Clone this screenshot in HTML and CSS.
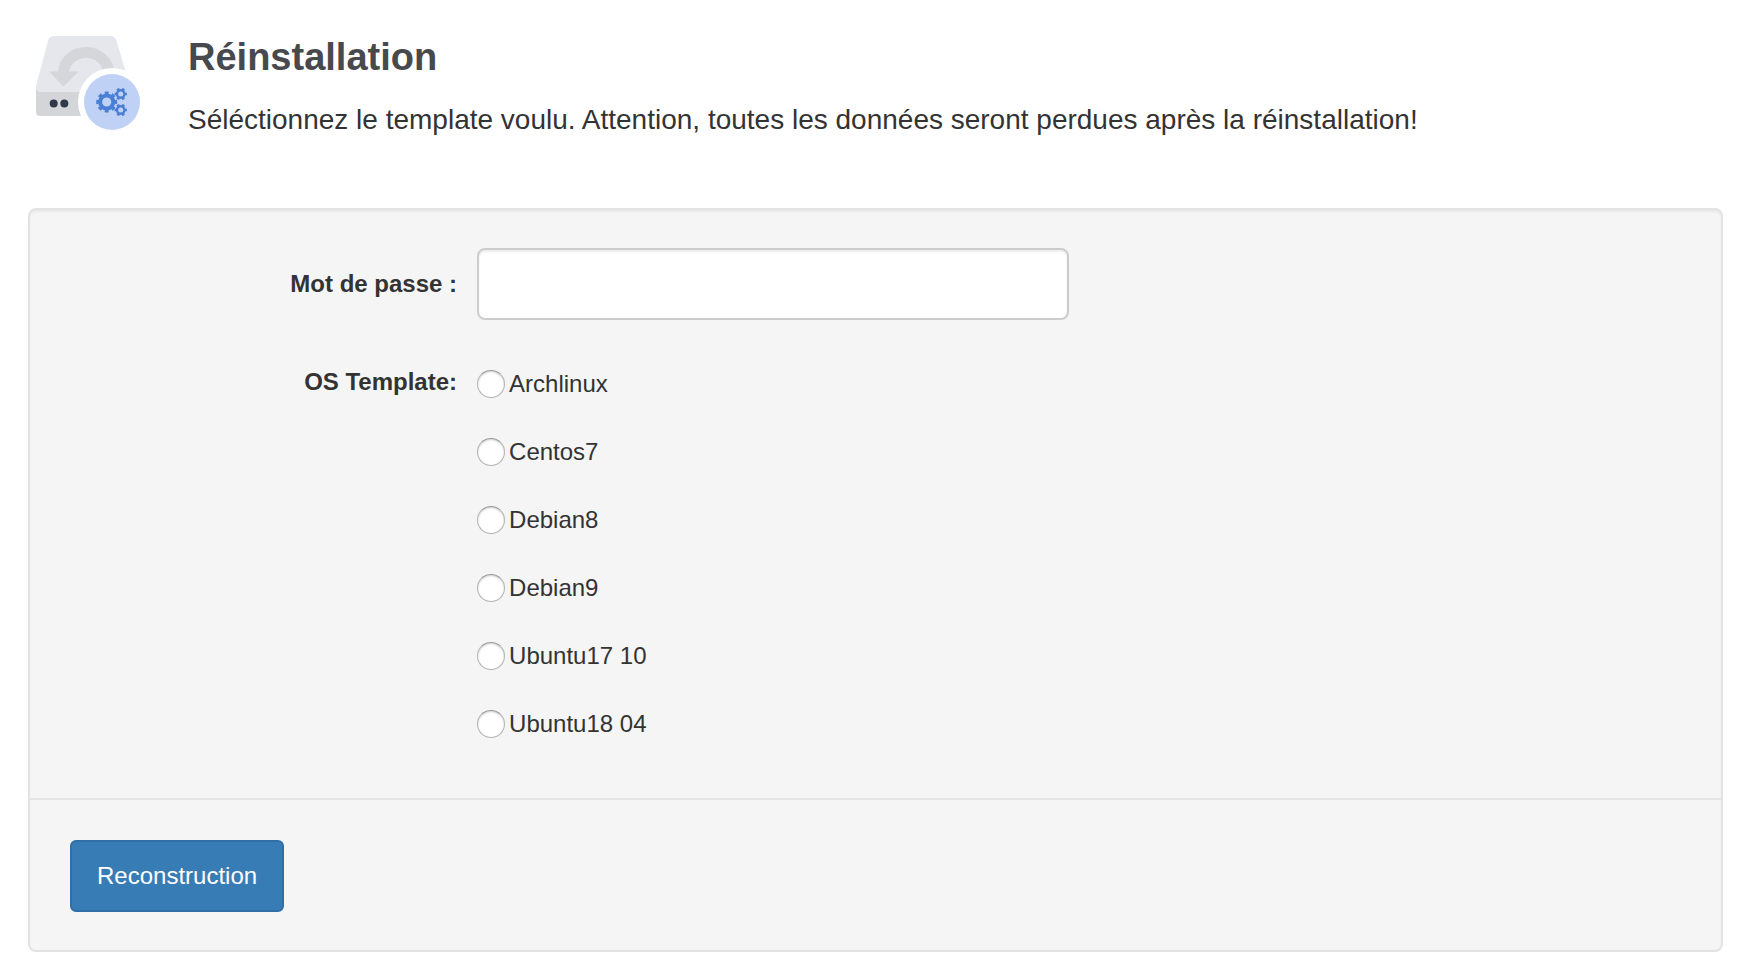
FILE: index.html
```html
<!DOCTYPE html>
<html lang="fr">
<head>
    <meta charset="UTF-8">
    <meta name="viewport" content="width=device-width, initial-scale=1.0">
    <title>Réinstallation</title>
    <link rel="stylesheet" href="styles.css">
</head>
<body>
    <header class="page-header">
        <svg class="page-icon" viewBox="36 36 104 94" aria-hidden="true">
            <!-- drive -->
            <path d="M36 86 V112 Q36 116 40 116 H128 V86 Z" fill="#d3d5d9"/>
            <path d="M54 36 H110 Q115 36 116.500 41 L130 86 V92 H41 Q36 92 36 86 L48 41 Q49 36 54 36 Z" fill="#e5e7ec"/>
            <path d="M63.500 73 A22.500 20.500 0 0 1 108.500 73" fill="none" stroke="#d5d6d9" stroke-width="11"/>
            <path d="M49 71.500 H78.500 L63.500 86.500 Z" fill="#d5d6d9"/>
            <circle cx="53.700" cy="103.500" r="4" fill="#2f3949"/>
            <circle cx="64.300" cy="103.500" r="4" fill="#2f3949"/>
            <!-- gears badge -->
            <circle cx="112" cy="102" r="34" fill="#fff"/>
            <circle cx="112" cy="102" r="28" fill="#bfd1f5"/>
            <g fill="none" stroke="#4a7fd6">
                <circle cx="106.700" cy="102" r="6.600" stroke-width="4"/>
                <circle cx="106.700" cy="102" r="9" stroke-width="3" pathLength="80" stroke-dasharray="5.400 4.600" stroke-dashoffset="2.700"/>
                <circle cx="120.700" cy="94" r="3.700" stroke-width="2.400"/>
                <circle cx="120.700" cy="94" r="5.200" stroke-width="2" pathLength="60" stroke-dasharray="5 5" stroke-dashoffset="2.500"/>
                <circle cx="120.700" cy="110" r="3.700" stroke-width="2.400"/>
                <circle cx="120.700" cy="110" r="5.200" stroke-width="2" pathLength="60" stroke-dasharray="5 5" stroke-dashoffset="2.500"/>
            </g>
        </svg>
        <div>
            <h1>Réinstallation</h1>
            <p>Séléctionnez le template voulu. Attention, toutes les données seront perdues après la réinstallation!</p>
        </div>
    </header>

    <form class="well" method="post">
        <div class="form-body">
            <div class="form-row">
                <label class="form-label" for="password">Mot de passe :</label>
                <input class="form-control" type="password" id="password" name="password">
            </div>
            <div class="form-row templates" role="radiogroup" aria-labelledby="template-label">
                <span class="form-label" id="template-label">OS Template:</span>
                <div class="radio-list">
                    <label><input type="radio" name="template" value="archlinux">Archlinux</label>
                    <label><input type="radio" name="template" value="centos7">Centos7</label>
                    <label><input type="radio" name="template" value="debian8">Debian8</label>
                    <label><input type="radio" name="template" value="debian9">Debian9</label>
                    <label><input type="radio" name="template" value="ubuntu17">Ubuntu17 10</label>
                    <label><input type="radio" name="template" value="ubuntu18">Ubuntu18 04</label>
                </div>
            </div>
        </div>
        <div class="form-actions">
            <button class="btn" type="submit">Reconstruction</button>
        </div>
    </form>
</body>
</html>
```
FILE: styles.css
```css
* {
    box-sizing: border-box;
}

body {
    margin: 0;
    padding: 36px 29px 24px 28px;
    font-family: "Helvetica Neue", "Liberation Sans", Arial, sans-serif;
    font-size: 24px;
    color: #333;
    background-color: #fff;
}

.page-header {
    display: flex;
    align-items: flex-start;
    gap: 48px;
    padding-left: 8px;
    margin-bottom: 68px;
}

.page-icon {
    flex: none;
    width: 104px;
    height: 94px;
}

h1 {
    margin: 0 0 22px;
    font-size: 38px;
    line-height: 42px;
    color: #47494e;
}

.page-header p {
    margin: 0;
    font-size: 28px;
    line-height: 40px;
}

.well {
    background-color: #f5f5f5;
    border: 2px solid #e3e3e3;
    border-radius: 8px;
    box-shadow: inset 0 2px 2px rgba(0, 0, 0, 0.05);
}

.form-body {
    display: grid;
    gap: 44px;
    padding: 38px 40px 54px;
}

.form-row {
    display: grid;
    grid-template-columns: 17fr 26fr 26fr;
    column-gap: 20px;
    align-items: center;
}

.templates {
    align-items: start;
}

.form-label {
    font-weight: bold;
    line-height: 36px;
    text-align: right;
}

.form-control {
    width: 100%;
    height: 72px;
    padding: 12px 24px;
    font: inherit;
    color: #555;
    background-color: #fff;
    border: 2px solid #ccc;
    border-radius: 8px;
    box-shadow: inset 0 2px 2px rgba(0, 0, 0, 0.075);
}

.radio-list {
    display: grid;
    justify-items: start;
    gap: 28px;
}

.radio-list label {
    display: flex;
    align-items: center;
    gap: 4px;
    line-height: 40px;
}

.radio-list input {
    appearance: none;
    width: 28px;
    height: 28px;
    margin: 0;
    background-color: #fff;
    border: 1px solid #b4b4b4;
    border-top-color: #999;
    border-radius: 50%;
    box-shadow: inset 0 1px 2px rgba(0, 0, 0, 0.2);
}

.radio-list input:checked {
    border: 9px solid #387cb6;
}

.form-actions {
    padding: 40px 40px 38px;
    border-top: 2px solid #e5e5e5;
}

.btn {
    height: 72px;
    padding: 0 25px;
    font: inherit;
    color: #fff;
    background-color: #387cb6;
    border: 2px solid #306fa5;
    border-radius: 6px;
    cursor: pointer;
}

.btn:hover {
    background-color: #306fa5;
}
```
